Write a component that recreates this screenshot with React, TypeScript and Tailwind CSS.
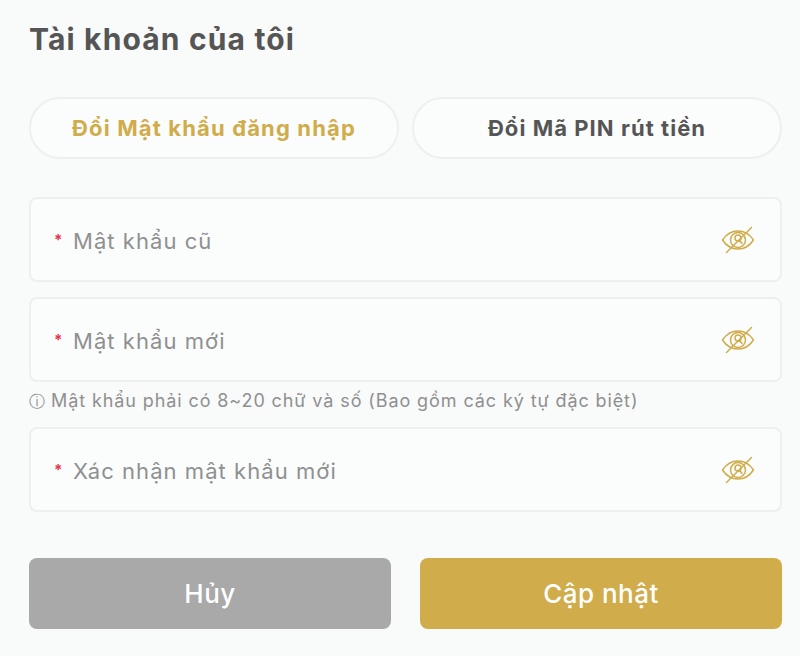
import React from 'react';

const EyeOff = () => (
  <svg width="34" height="28" viewBox="0 0 34 28" fill="none" stroke="#d0ac4b" strokeWidth="1.5" strokeLinecap="round" strokeLinejoin="round" className="shrink-0">
    <path d="M1.5 14C5.5 8 10.5 5 17 5s11.5 3 15.5 9c-4 6-9 9-15.5 9S5.5 20 1.5 14Z" />
    <circle cx="17" cy="14" r="7.5" />
    <circle cx="17" cy="12" r="3" />
    <path d="M17 15c2 0 3.5 1 4 2.5" />
    <path d="M5.5 26.5 30.5 1.5" />
  </svg>
);

const PasswordField = ({ label }: { label: string }) => (
  <div className="h-[85px] flex items-center justify-between pl-[23px] pr-[25px] bg-[#fbfcfc] border-2 border-[#eef0f0] rounded-[8px]">
    <div className="flex items-center">
      <span className="w-[19px] text-[15px] font-bold leading-none text-[#e8344e]">*</span>
      <span className="pt-[3px] text-[22px] text-[#8f9090] tracking-[1.05px]">{label}</span>
    </div>
    <EyeOff />
  </div>
);

export default function App() {
  return (
    <div className="w-[800px] h-[656px] overflow-hidden bg-[#f9fafa] pl-[29px] pr-[18px] font-['Inter','Noto_Sans',sans-serif]">
      <h1 className="h-[97px] pt-[16px] text-[30px] leading-[46px] font-bold text-[#555555] tracking-[1.15px]">Tài khoản của tôi</h1>

      <div className="flex gap-[13px]">
        <button className="flex-1 h-[62px] rounded-full bg-[#fbfcfc] border-2 border-[#eef0f0] text-[22px] font-bold text-[#d0ac4b] tracking-[1.15px]">Đổi Mật khẩu đăng nhập</button>
        <button className="flex-1 h-[62px] rounded-full bg-[#fbfcfc] border-2 border-[#eef0f0] text-[22px] font-bold text-[#555555] tracking-[1.05px]">Đổi Mã PIN rút tiền</button>
      </div>

      <div className="mt-[38px] flex flex-col gap-[15px]">
        <PasswordField label="Mật khẩu cũ" />
        <PasswordField label="Mật khẩu mới" />
      </div>
      <p className="h-[45px] pt-[6px] flex items-start text-[18px] leading-[26px] text-[#8f9090] tracking-[0.9px]">
        <span className="w-[22px] text-[16px] tracking-normal">ⓘ</span>
        Mật khẩu phải có 8~20 chữ và số (Bao gồm các ký tự đặc biệt)
      </p>
      <PasswordField label="Xác nhận mật khẩu mới" />

      <div className="mt-[46px] flex gap-[29px]">
        <button className="flex-1 h-[71px] rounded-[8px] bg-[#a9a9a9] text-[26px] font-medium text-white tracking-[0.5px]">Hủy</button>
        <button className="flex-1 h-[71px] rounded-[8px] bg-[#d0ac4b] text-[26px] font-medium text-white tracking-[0.5px]">Cập nhật</button>
      </div>
    </div>
  );
}
